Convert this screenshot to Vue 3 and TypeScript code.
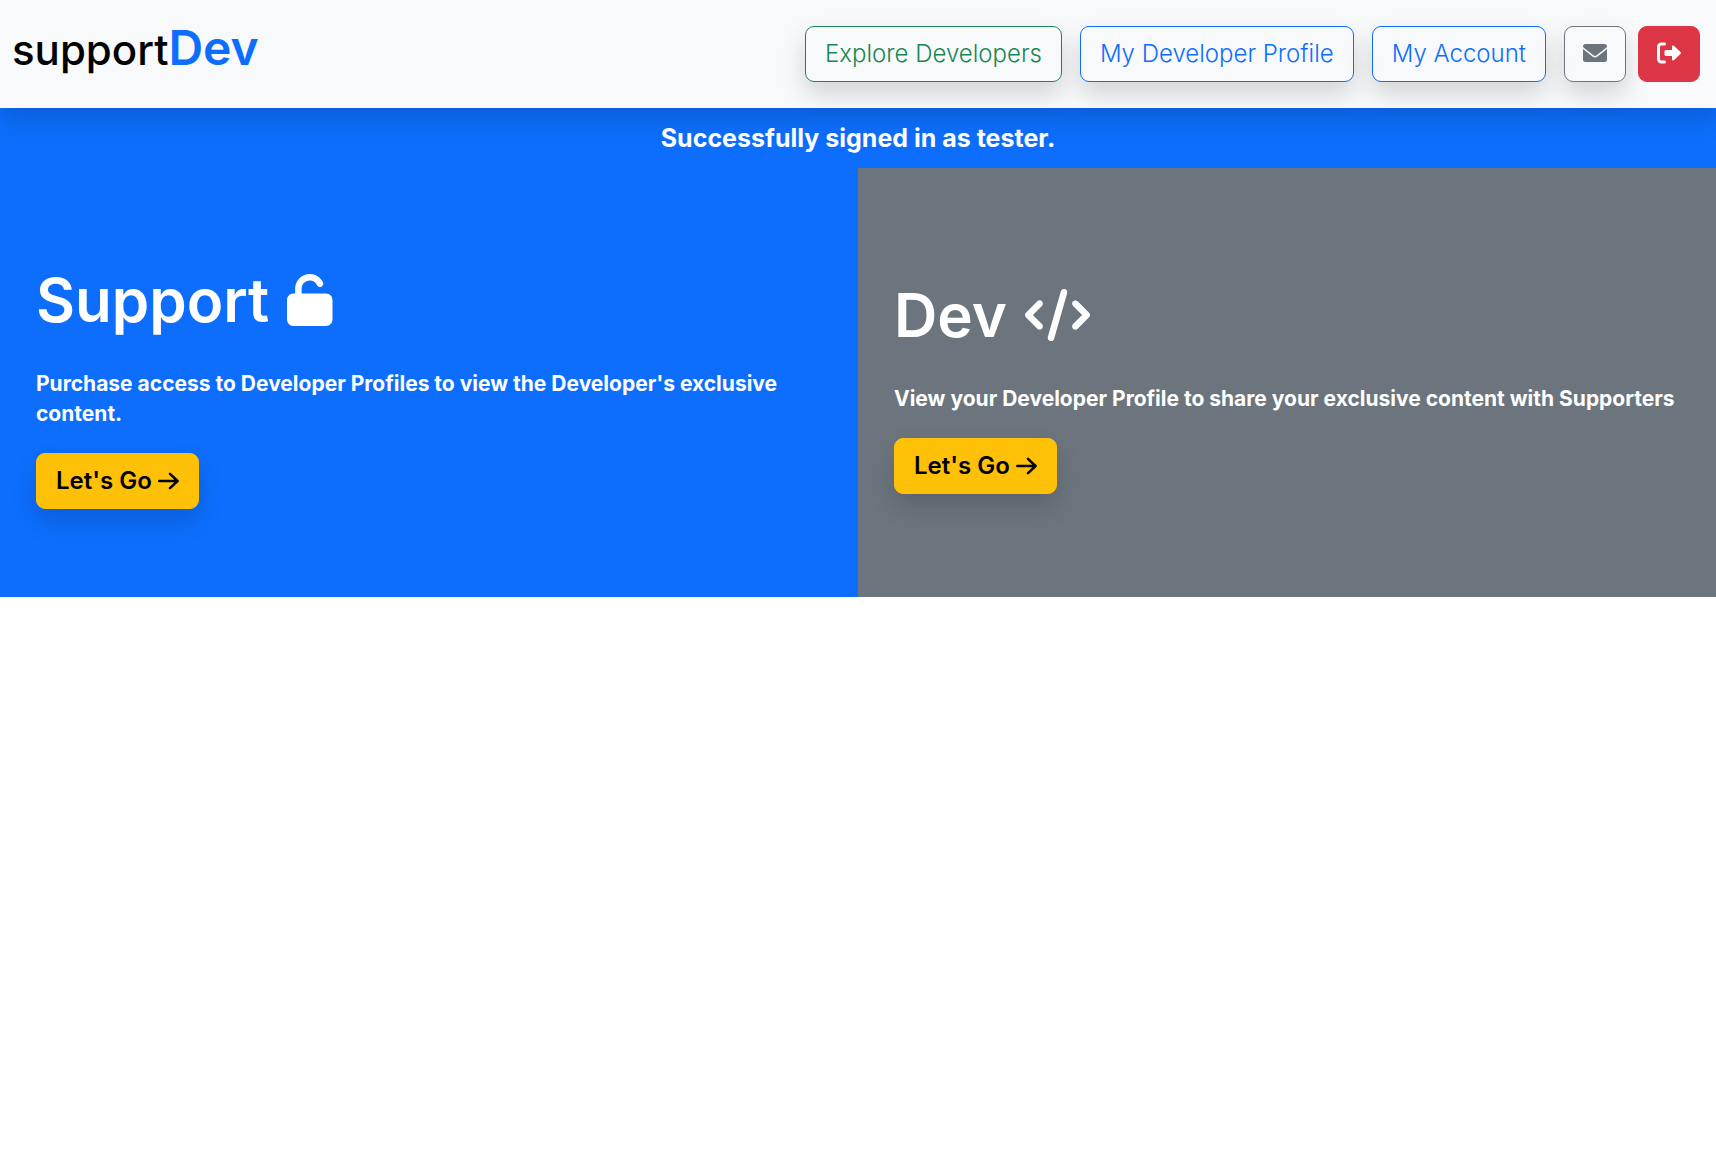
<script setup lang="ts">
interface NavLink {
  label: string
  tone: 'success' | 'primary'
}

interface Panel {
  id: string
  title: string
  text: string
  viewBox: string
  icon: string
}

const navLinks: NavLink[] = [
  { label: 'Explore Developers', tone: 'success' },
  { label: 'My Developer Profile', tone: 'primary' },
  { label: 'My Account', tone: 'primary' },
]

const panels: Panel[] = [
  {
    id: 'support',
    title: 'Support',
    text: "Purchase access to Developer Profiles to view the Developer's exclusive content.",
    viewBox: '0 0 448 512',
    icon: 'M144 144c0-44.2 35.8-80 80-80c31.9 0 59.4 18.6 72.3 45.7c7.6 16 26.7 22.8 42.6 15.2s22.8-26.7 15.2-42.6C331 33.7 281.5 0 224 0C144.5 0 80 64.5 80 144v48H64c-35.3 0-64 28.7-64 64V448c0 35.3 28.7 64 64 64H384c35.3 0 64-28.7 64-64V256c0-35.3-28.7-64-64-64H144V144z',
  },
  {
    id: 'dev',
    title: 'Dev',
    text: 'View your Developer Profile to share your exclusive content with Supporters',
    viewBox: '0 0 640 512',
    icon: 'M392.8 1.2c-17-4.9-34.7 5-39.6 22l-128 448c-4.9 17 5 34.7 22 39.6s34.7-5 39.6-22l128-448c4.9-17-5-34.7-22-39.6zm80.6 120.1c-12.5 12.5-12.5 32.8 0 45.3L562.7 256l-89.4 89.4c-12.5 12.5-12.5 32.8 0 45.3s32.8 12.5 45.3 0l112-112c12.5-12.5 12.5-32.8 0-45.3l-112-112c-12.5-12.5-32.8-12.5-45.3 0zm-306.7 0c-12.5-12.5-32.8-12.5-45.3 0l-112 112c-12.5 12.5-12.5 32.8 0 45.3l112 112c12.5 12.5 32.8 12.5 45.3 0s12.5-32.8 0-45.3L77.3 256l89.4-89.4c12.5-12.5 12.5-32.8 0-45.3z',
  },
]
</script>

<template>
  <div class="page">
    <header class="navbar">
      <a class="brand" href="#">support<span class="brand-accent">Dev</span></a>
      <nav class="nav">
        <a v-for="link in navLinks" :key="link.label" class="btn" :class="link.tone" href="#">{{ link.label }}</a>
        <div class="icon-group">
          <a class="btn icon-btn secondary" href="#" aria-label="Messages">
            <svg class="icon" viewBox="0 0 512 512" aria-hidden="true">
              <path d="M256 352c-16.53 0-33.06-5.422-47.16-16.41L0 173.2V400C0 426.5 21.49 448 48 448h416c26.51 0 48-21.49 48-48V173.2l-208.8 162.5C289.1 346.6 272.5 352 256 352zM16.29 145.3l212.2 165.1c16.19 12.6 38.87 12.6 55.06 0l212.2-165.1C505.1 137.3 512 125 512 112C512 85.49 490.5 64 464 64h-416C21.49 64 0 85.49 0 112C0 125 6.01 137.3 16.29 145.3z" />
            </svg>
          </a>
          <button class="btn icon-btn danger" type="button" aria-label="Sign out">
            <svg class="icon" viewBox="0 0 512 512" aria-hidden="true">
              <path d="M160 416H96c-17.7 0-32-14.3-32-32V128c0-17.7 14.3-32 32-32h64c17.7 0 32-14.3 32-32s-14.3-32-32-32H96C43 32 0 75 0 128V384c0 53 43 96 96 96h64c17.7 0 32-14.3 32-32s-14.3-32-32-32zM504.5 273.4c4.8-4.5 7.5-10.8 7.5-17.4s-2.7-12.9-7.5-17.4l-144-136c-7-6.6-17.2-8.4-26-4.6S320 110.4 320 120v72H192c-17.7 0-32 14.3-32 32v64c0 17.7 14.3 32 32 32h128v72c0 9.6 5.7 18.2 14.5 22s19 2 26-4.6l144-136z" />
            </svg>
          </button>
        </div>
      </nav>
    </header>

    <p class="flash" role="status">Successfully signed in as tester.</p>

    <main class="panels">
      <section v-for="panel in panels" :key="panel.id" class="panel" :class="panel.id">
        <h1 class="title">
          {{ panel.title }}
          <svg class="title-icon" :viewBox="panel.viewBox" aria-hidden="true"><path :d="panel.icon" /></svg>
        </h1>
        <p class="text">{{ panel.text }}</p>
        <button class="btn warning" type="button">
          Let's Go
          <svg class="arrow" viewBox="0 0 21 24" aria-hidden="true">
            <path d="M1.3 12H19.6M12 4.8L19.6 12L12 19.2" />
          </svg>
        </button>
      </section>
    </main>
  </div>
</template>

<style>
body {
  margin: 0;
  background: #fff;
}
</style>

<style scoped>
.page {
  font-family: Inter, "Liberation Sans", sans-serif;
  font-size: 24px;
  line-height: 36px;
}

.navbar {
  position: relative;
  display: flex;
  align-items: center;
  justify-content: space-between;
  box-sizing: border-box;
  padding: 26px 16px 26px 12px;
  background: #f8f9fa;
  box-shadow: 0 12px 24px rgba(0, 0, 0, 0.15);
}

.brand {
  margin-bottom: 10px;
  color: #000;
  font-size: 42px;
  font-weight: 500;
  line-height: 42px;
  text-decoration: none;
}

.brand-accent {
  color: #0d6efd;
  font-size: 48px;
  font-weight: 600;
}

.nav {
  display: flex;
  align-items: center;
  gap: 18px;
}

.icon-group {
  display: flex;
  gap: 12px;
}

.btn {
  display: inline-flex;
  align-items: center;
  justify-content: center;
  box-sizing: border-box;
  height: 56px;
  padding: 0 19px;
  border: 1px solid currentColor;
  border-radius: 9px;
  background: transparent;
  box-shadow: 0 12px 24px rgba(0, 0, 0, 0.15);
  font: inherit;
  font-weight: 300;
  text-decoration: none;
  white-space: nowrap;
  cursor: pointer;
}

.success {
  color: #198754;
}

.primary {
  color: #0d6efd;
}

.secondary {
  color: #6c757d;
}

.danger {
  border-color: #dc3545;
  background: #dc3545;
  box-shadow: none;
  color: #fff;
}

.icon-btn {
  width: 62px;
  padding: 0 0 2px;
}

.icon {
  width: 24px;
  height: 24px;
  fill: currentColor;
}

.flash {
  margin: 0;
  padding: 12px;
  background: #0d6efd;
  color: #fff;
  font-size: 25px;
  font-weight: 700;
  text-align: center;
}

.panels {
  display: grid;
  grid-template-columns: 1fr 1fr;
}

.panel {
  display: flex;
  flex-direction: column;
  align-items: flex-start;
  justify-content: center;
  gap: 24px;
  padding: 87px 36px 88px;
  color: #fff;
}

.support {
  background: #0d6efd;
}

.dev {
  background: #6c757d;
}

.title {
  display: flex;
  align-items: center;
  gap: 18px;
  margin: 0;
  font-size: 60px;
  font-weight: 600;
  line-height: 90px;
}

.title-icon {
  height: 52px;
  fill: currentColor;
}

.text {
  margin: 0;
  font-size: 21px;
  font-weight: 700;
  line-height: 30px;
}

.warning {
  gap: 6px;
  border-color: #ffc107;
  background: #ffc107;
  color: #000;
  font-weight: 600;
}

.arrow {
  height: 24px;
  fill: none;
  stroke: currentColor;
  stroke-width: 2.5;
  stroke-linecap: round;
  stroke-linejoin: round;
}
</style>
